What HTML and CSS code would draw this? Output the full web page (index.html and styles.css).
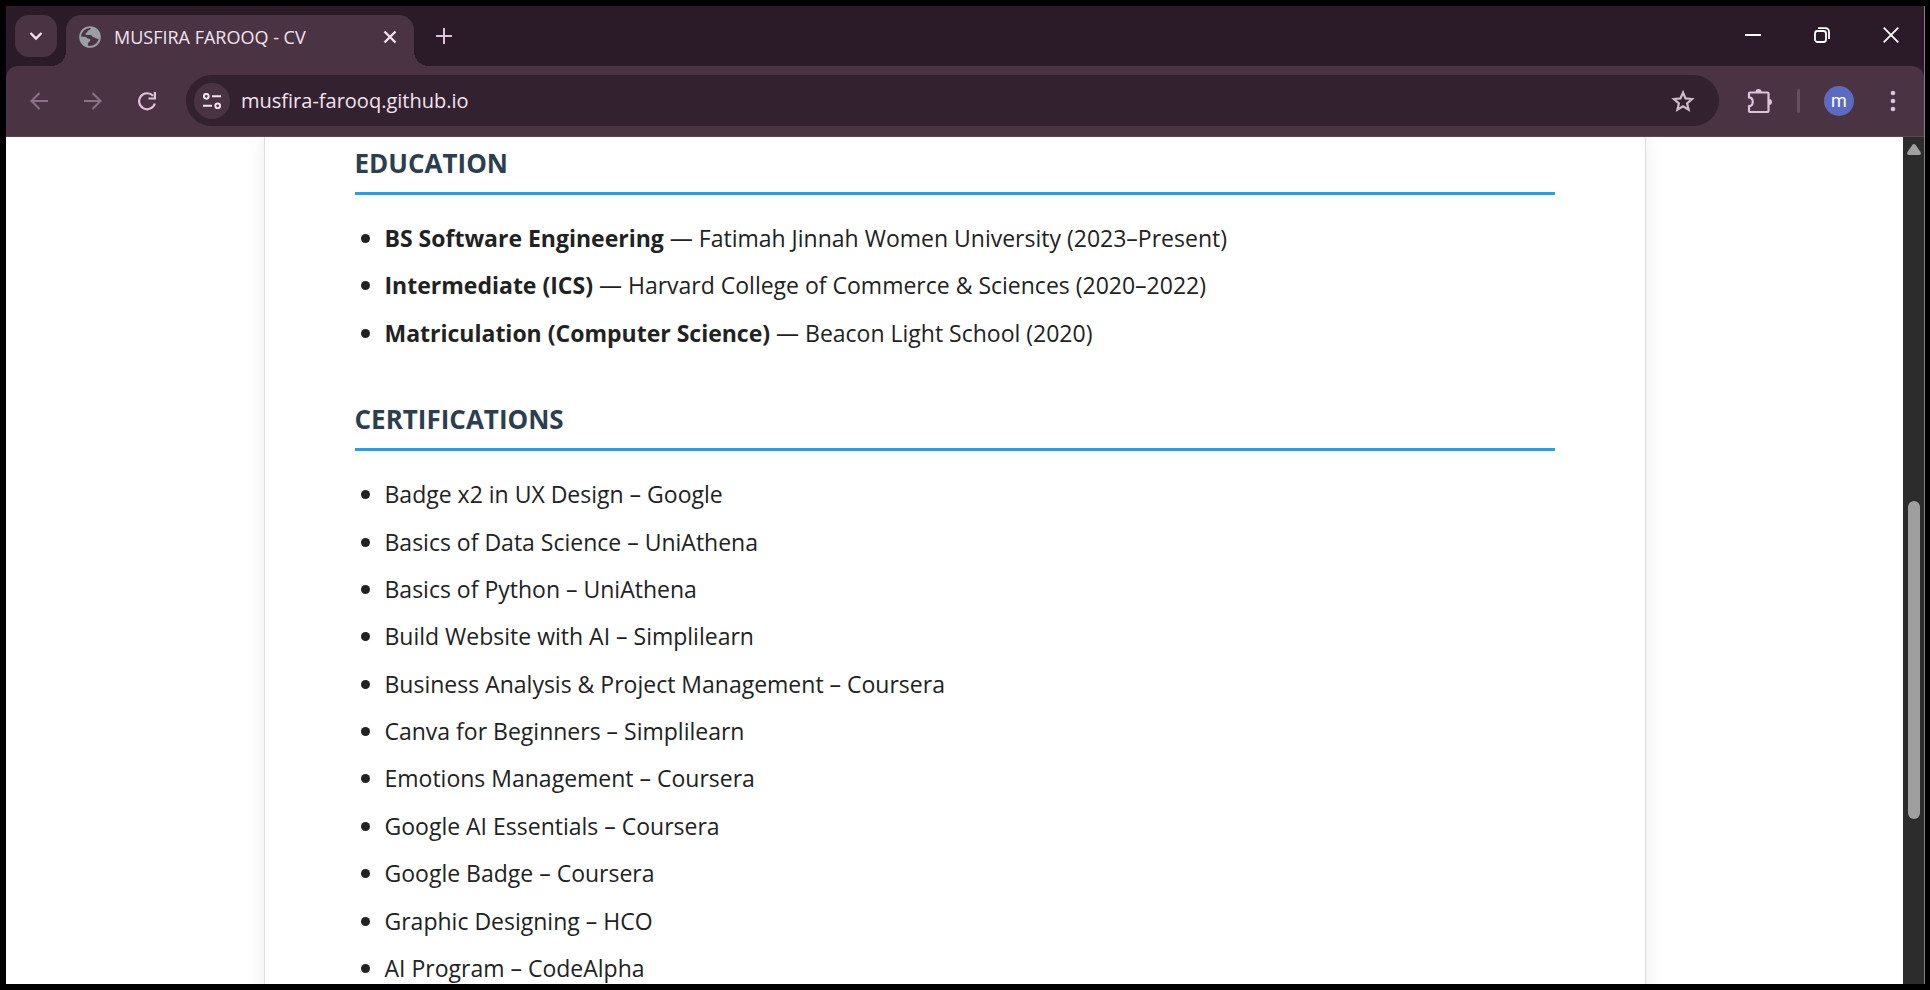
FILE: index.html
```html
<!DOCTYPE html>
<html lang="en">
<head>
<meta charset="utf-8">
<title>MUSFIRA FAROOQ - CV</title>
<link rel="stylesheet" href="styles.css">
</head>
<body>
<div class="window">
  <header class="tabstrip">
    <button class="tab-search" aria-label="Search tabs">
      <svg width="14" height="14" viewBox="0 0 14 14" fill="none" stroke="currentColor" stroke-width="2.4"><path d="M1.500 4 7 9.500l5.500-5.500"/></svg>
    </button>
    <div class="tab">
      <svg class="globe" width="22" height="22" viewBox="0 0 22 22"><circle cx="11" cy="11" r="9.900" fill="none" stroke="#9aa0a6" stroke-width="1.800"/><path fill="#9aa0a6" d="M12.500 1.200c-1 1-1 2.600-2.800 3.100-1.400.4-1.200 2.200-2.600 2.700-1.200.5-.6 2 .6 2h3.800c1.500 0 1.300 2.200 3 2.200 1.500 0 2.300 1.500 5.300 1.800C22 6.500 17.500 1 12.500 1.200ZM1.200 10.500l4.300.2c2 .2 2.500 1.800 4.500 2.100 1.800.4 1.800 2.200.2 3-1.400.6-.9 2.200-1.700 4.700C4 19.500 1 15.500 1.200 10.500Z"/></svg>
      <span class="tab-title">MUSFIRA FAROOQ - CV</span>
      <button class="tab-close" aria-label="Close tab">
        <svg width="14" height="14" viewBox="0 0 14 14" fill="none" stroke="currentColor" stroke-width="2.300"><path d="m1.500 1.500 11 11m0-11-11 11"/></svg>
      </button>
    </div>
    <button class="new-tab" aria-label="New tab">
      <svg width="16" height="16" viewBox="0 0 16 16" fill="none" stroke="currentColor" stroke-width="2"><path d="M8 0v16M0 8h16"/></svg>
    </button>
    <div class="window-controls">
      <button aria-label="Minimize"><svg width="16" height="16" viewBox="0 0 16 16" fill="none" stroke="currentColor" stroke-width="2"><path d="M0 8h16"/></svg></button>
      <button aria-label="Restore"><svg width="16" height="16" viewBox="0 0 16 16" fill="none" stroke="currentColor" stroke-width="1.800"><rect x="1" y="4" width="11" height="11" rx="2.500"/><path d="M4 1.200h7.500a3.500 3.500 0 0 1 3.500 3.500V12"/></svg></button>
      <button aria-label="Close"><svg width="16" height="16" viewBox="0 0 16 16" fill="none" stroke="currentColor" stroke-width="1.800"><path d="m.7.7 14.600 14.600m0-14.600L.7 15.300"/></svg></button>
    </div>
  </header>
  <nav class="toolbar">
    <button class="nav-button dim" aria-label="Back"><svg width="18" height="18" viewBox="0 0 18 18" fill="none" stroke="currentColor" stroke-width="2"><path d="M18 9H1.500M9.500 1 1.500 9l8 8"/></svg></button>
    <button class="nav-button dim" aria-label="Forward"><svg width="18" height="18" viewBox="0 0 18 18" fill="none" stroke="currentColor" stroke-width="2"><path d="M0 9h16.500M8.500 1l8 8-8 8"/></svg></button>
    <button class="nav-button" aria-label="Reload"><svg width="20" height="20" viewBox="0 0 20 20" fill="none" stroke="currentColor" stroke-width="2.200"><path d="M17.800 12.500A8 8 0 1 1 16 4.800M17.900 1v6.500h-6.400"/></svg></button>
    <div class="omnibox">
      <button class="site-info" aria-label="View site information"><svg width="18" height="16" viewBox="0 0 18 16" fill="none" stroke="currentColor" stroke-width="2"><circle cx="3.300" cy="3.300" r="2.400"/><path d="M9 3.300h9M0 12.800h9"/><circle cx="14.700" cy="12.800" r="2.400"/></svg></button>
      <input class="address" type="text" aria-label="Address" value="musfira-farooq.github.io">
      <button class="star" aria-label="Bookmark this tab"><svg width="24" height="24" viewBox="0 0 24 24" fill="none" stroke="currentColor" stroke-width="2.200"><path d="m12 3.500 2.500 5.900 6.500.6-4.900 4.300 1.500 6.300-5.600-3.400-5.600 3.400 1.500-6.300L3 10l6.500-.6Z"/></svg></button>
    </div>
    <button class="extensions" aria-label="Extensions"><svg width="26" height="26" viewBox="0 0 26 26" fill="none" stroke="currentColor" stroke-width="2.200"><path d="M3 4.500h17.500a1 1 0 0 1 1 1v17.500a1 1 0 0 1-1 1H3a1 1 0 0 1-1-1v-4.700c5-.4 5-8.500 0-8.900V5.500a1 1 0 0 1 1-1Z"/><path fill="currentColor" stroke="none" d="M8.500 4a3 3 0 0 1 6 0ZM22 11a3 3 0 0 1 0 6Z"/></svg></button>
    <span class="divider"></span>
    <button class="avatar" aria-label="Profile">m</button>
    <button class="menu" aria-label="Menu"><svg width="6" height="22" viewBox="0 0 6 22" fill="currentColor"><circle cx="3" cy="3" r="2.300"/><circle cx="3" cy="11" r="2.300"/><circle cx="3" cy="19" r="2.300"/></svg></button>
  </nav>
  <div class="viewport">
    <main class="page">
      <article class="cv">
        <section>
          <h2>EDUCATION</h2>
          <ul>
            <li><strong>BS Software Engineering</strong> — Fatimah Jinnah Women University (2023–Present)</li>
            <li><strong>Intermediate (ICS)</strong> — Harvard College of Commerce &amp; Sciences (2020–2022)</li>
            <li><strong>Matriculation (Computer Science)</strong> — Beacon Light School (2020)</li>
          </ul>
        </section>
        <section>
          <h2>CERTIFICATIONS</h2>
          <ul>
            <li>Badge x2 in UX Design – Google</li>
            <li>Basics of Data Science – UniAthena</li>
            <li>Basics of Python – UniAthena</li>
            <li>Build Website with AI – Simplilearn</li>
            <li>Business Analysis &amp; Project Management – Coursera</li>
            <li>Canva for Beginners – Simplilearn</li>
            <li>Emotions Management – Coursera</li>
            <li>Google AI Essentials – Coursera</li>
            <li>Google Badge – Coursera</li>
            <li>Graphic Designing – HCO</li>
            <li>AI Program – CodeAlpha</li>
          </ul>
        </section>
      </article>
    </main>
    <div class="scrollbar">
      <svg width="14" height="11" viewBox="0 0 14 11" fill="#a0a0a0"><path d="M5.300 1.100a2.200 2.200 0 0 1 3.400 0l4.800 7c.8 1.400.2 2.900-1.200 2.900H1.700C.3 11-.3 9.500.5 8.100Z"/></svg>
      <div class="thumb"></div>
    </div>
  </div>
</div>
</body>
</html>
```

FILE: styles.css
```css
* { box-sizing: border-box; }

body {
  margin: 0;
  height: 100vh;
  padding: 6px 5px 6px 6px;
  background: #000;
  font-family: "Open Sans", "Noto Sans", sans-serif;
}

button {
  display: flex;
  align-items: center;
  justify-content: center;
  flex: none;
  padding: 0;
  border: 0;
  background: none;
  color: inherit;
  font: inherit;
}

svg { display: block; flex: none; }

.window {
  display: flex;
  flex-direction: column;
  height: 100%;
  overflow: hidden;
  border-right: 1px solid #808080;
  background: #2b1b28;
  color: #dfc3da;
}

.tabstrip {
  display: flex;
  align-items: flex-start;
  height: 60px;
  padding: 9px 0 0 9px;
}

.tab-search {
  width: 42px;
  height: 42px;
  border-radius: 14px;
  background: #4a3444;
  color: #f3e3ef;
}

.tab {
  position: relative;
  display: flex;
  align-items: center;
  width: 348px;
  height: 51px;
  margin-left: 9px;
  padding: 0 17px 8px 13px;
  border-radius: 15px 15px 0 0;
  background: #4a3444;
  color: #f3e3ef;
}

.tab::before,
.tab::after {
  content: "";
  position: absolute;
  bottom: 0;
  width: 15px;
  height: 15px;
}

.tab::before {
  right: 100%;
  background: radial-gradient(circle at 0 0, transparent 15px, #4a3444 15px);
}

.tab::after {
  left: 100%;
  background: radial-gradient(circle at 100% 0, transparent 15px, #4a3444 15px);
}

.tab-title {
  flex: 1;
  margin-left: 13px;
  font-size: 18px;
  white-space: nowrap;
}

.new-tab { width: 42px; height: 42px; margin-left: 9px; }

.window-controls { display: flex; margin-left: auto; margin-right: -1px; color: #fff; }
.window-controls button { width: 69px; height: 40px; }

.toolbar {
  display: flex;
  align-items: center;
  height: 71px;
  padding: 0 20px 1px 12px;
  border-bottom: 1px solid #5b4555;
  border-radius: 12px 12px 0 0;
  background: #4a3444;
}

.nav-button { width: 42px; height: 42px; margin-right: 12px; }
.nav-button.dim { color: #8b7285; }

.omnibox {
  display: flex;
  align-items: center;
  flex: 1;
  height: 51px;
  margin-left: 6px;
  padding: 0 24px 0 8px;
  border-radius: 26px;
  background: #33212f;
}

.site-info {
  width: 36px;
  height: 36px;
  border-radius: 50%;
  background: #4a3444;
  color: #f3e3ef;
}

.address {
  flex: 1;
  min-width: 0;
  margin-left: 11px;
  padding: 0;
  border: 0;
  outline: 0;
  background: none;
  color: #f3e3ef;
  font: inherit;
  font-size: 20px;
}

.star { color: #cfbccb; }
.extensions { margin-left: 28px; }

.divider {
  width: 3px;
  height: 24px;
  margin: 0 24px;
  border-radius: 2px;
  background: #664e60;
}

.avatar {
  width: 30px;
  height: 30px;
  border-radius: 50%;
  background: #5c6bc0;
  color: #fff;
  font-family: Roboto, sans-serif;
  font-size: 18px;
}

.menu { width: 22px; margin-left: 28px; }

.viewport {
  display: flex;
  flex: 1;
  min-height: 0;
  background: #fff;
}

.page { flex: 1; overflow: hidden; }

.cv {
  max-width: 1382px;
  margin: 0 auto;
  padding: 0 90px;
  border: solid #ddd;
  border-width: 0 1px;
  box-shadow: 0 0 18px rgba(0, 0, 0, 0.08);
  background: #fff;
  color: #222;
}

h2 {
  margin: 0 0 25px;
  padding: 4px 0 7px;
  border-bottom: 3px solid #3498db;
  color: #2c3e50;
  font-size: 26px;
  line-height: 44px;
}

ul {
  margin: 0;
  padding: 0 0 31px 30px;
  list-style: none;
}

li {
  margin-bottom: 10px;
  font-size: 23px;
  line-height: 1.625;
}

li::before {
  content: "";
  display: inline-block;
  width: 9px;
  height: 9px;
  margin: 0 15px 0 -24px;
  border-radius: 50%;
  background: #222;
  vertical-align: 4px;
}

.scrollbar {
  display: flex;
  flex-direction: column;
  align-items: center;
  flex: none;
  width: 21px;
  padding-top: 7px;
  background: #2c2c2c;
}

.thumb {
  width: 12px;
  height: 318px;
  margin-top: 346px;
  border-radius: 6px;
  background: #9f9f9f;
}
```
